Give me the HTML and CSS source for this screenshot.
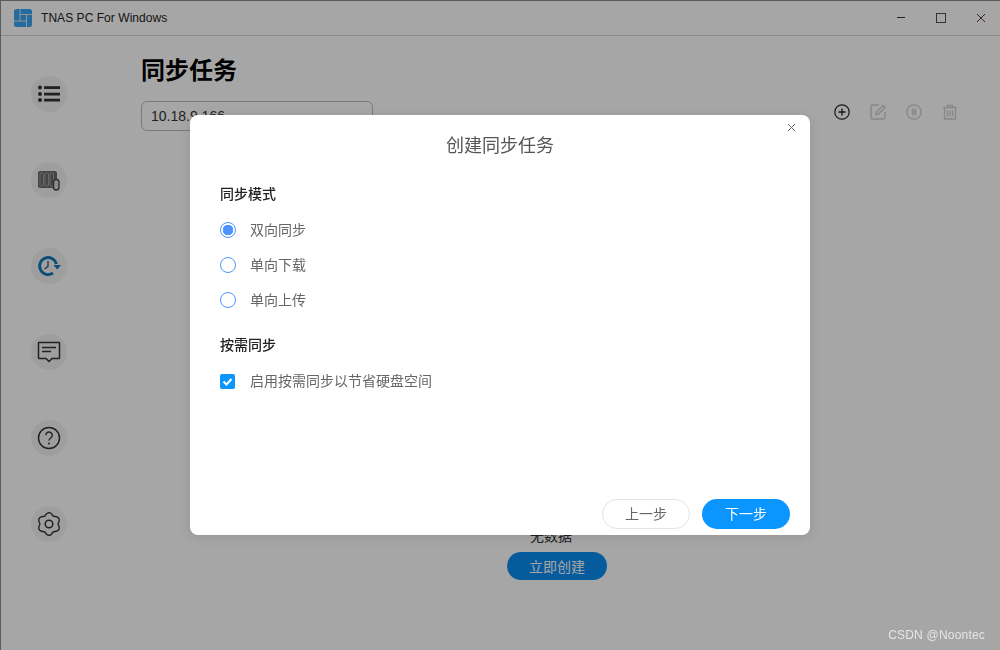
FILE: index.html
```html
<!DOCTYPE html>
<html lang="zh">
<head>
<meta charset="utf-8">
<title>TNAS PC For Windows</title>
<link rel="stylesheet" href="styles.css">
</head>
<body>
<div class="window">
  <header class="titlebar">
    <svg class="logo" width="18" height="18" viewBox="0 0 18 18"><rect width="18" height="18" rx="2.500" fill="#38a6f5"/><path d="M6 0V12M6 5.500H18M12.500 5.500V18M0 12H12.500" fill="none" stroke="#e4e4e4" stroke-width="1"/></svg>
    <span class="app-name">TNAS PC For Windows</span>
    <div class="win-controls">
      <svg width="12" height="12" viewBox="0 0 12 12"><path d="M2 5.500h8" stroke="#3a3a3a" fill="none"/></svg>
      <svg width="12" height="12" viewBox="0 0 12 12"><rect x="1.500" y="1.500" width="9" height="9" fill="none" stroke="#5a4a3c"/></svg>
      <svg width="12" height="12" viewBox="0 0 12 12"><path d="M2 2l8 8M10 2l-8 8" stroke="#5a3a30" fill="none"/></svg>
    </div>
  </header>
  <div class="main">
    <nav class="sidebar">
      <div class="nav-btn"><svg width="24" height="24" viewBox="0 0 24 24"><g fill="#333"><circle cx="3" cy="5.500" r="2"/><circle cx="3" cy="12" r="2"/><circle cx="3" cy="18" r="2"/><rect x="7" y="4.200" width="16" height="2.800"/><rect x="7" y="10.700" width="16" height="2.800"/><rect x="7" y="16.700" width="16" height="2.800"/></g></svg></div>
      <div class="nav-btn"><svg width="24" height="24" viewBox="0 0 24 24"><rect x="1" y="3" width="19" height="17" rx="2" fill="#6a6a6a"/><g fill="none" stroke="#a0a0a0"><rect x="3" y="5" width="3.500" height="13" rx="1"/><rect x="8" y="5" width="3.500" height="13" rx="1"/><rect x="13" y="5" width="3.500" height="13" rx="1"/></g><rect x="16.500" y="11.500" width="5.500" height="10.500" rx="2.700" fill="#d8d8d8" stroke="#4a4a4a" stroke-width="1.400"/></svg></div>
      <div class="nav-btn"><svg width="24" height="24" viewBox="0 0 24 24"><path d="M19.400 10A8.500 8.500 0 1 0 16 19" fill="none" stroke="#0f78b8" stroke-width="2.800"/><path d="M16.500 11h7.500l-3.700 4.500z" fill="#0f78b8"/><path d="M11 7V12.500L7.500 15" fill="none" stroke="#17506e" stroke-width="1.200"/></svg></div>
      <div class="nav-btn"><svg width="24" height="24" viewBox="0 0 24 24"><path d="M2 2.500h20a.5.5 0 0 1 .5.5v15a.5.5 0 0 1-.5.500h-7l-3 3-3-3H2a.5.5 0 0 1-.5-.5V3a.5.5 0 0 1 .5-.5z" fill="none" stroke="#333" stroke-width="1.500"/><path d="M5 7.500h14M5 11.500h9" stroke="#333" stroke-width="1.600" fill="none"/></svg></div>
      <div class="nav-btn"><svg width="24" height="24" viewBox="0 0 24 24"><circle cx="12" cy="12" r="10.500" fill="none" stroke="#333" stroke-width="1.500"/><path d="M8.800 9.200a3.200 3.200 0 1 1 4.800 2.800c-1.100.7-1.600 1.300-1.600 2.600" fill="none" stroke="#333" stroke-width="1.400"/><circle cx="12" cy="17.500" r="1" fill="#333"/></svg></div>
      <div class="nav-btn"><svg width="24" height="24" viewBox="0 0 24 24"><path d="M21 12Q25 4.500 16.250 4.200Q12 -3 7.750 4.200Q-1 4.500 3 12Q-1 19.500 7.750 19.800Q12 27 16.250 19.800Q25 19.500 21 12Z" fill="none" stroke="#333" stroke-width="1.400" stroke-linejoin="round"/><circle cx="12" cy="12" r="3.800" fill="none" stroke="#333" stroke-width="1.500"/></svg></div>
    </nav>
    <section class="content">
      <h1 class="page-title">同步任务</h1>
      <div class="toolbar-row">
        <div class="select">10.18.9.166</div>
        <div class="tools">
          <svg width="16" height="16" viewBox="0 0 16 16"><circle cx="8" cy="8" r="7.200" fill="none" stroke="#222" stroke-width="1.200"/><path d="M8 4.500v7M4.500 8h7" stroke="#222" stroke-width="1.300"/></svg>
          <svg width="16" height="16" viewBox="0 0 16 16"><path d="M8.500 1H2.500A1.500 1.500 0 0 0 1 2.500v11A1.500 1.500 0 0 0 2.500 15H13.500A1.500 1.500 0 0 0 15 13.500V8" fill="none" stroke="#d0d0d0" stroke-width="1.400"/><path d="M6 10.500l.5-2.500 6.500-6.500 2 2L8.500 10z" fill="none" stroke="#d0d0d0" stroke-width="1.400"/></svg>
          <svg width="16" height="16" viewBox="0 0 16 16"><circle cx="8" cy="8" r="7.200" fill="none" stroke="#d0d0d0" stroke-width="1.300"/><rect x="5.800" y="4.800" width="1.800" height="6.400" fill="#d0d0d0"/><rect x="8.400" y="4.800" width="1.800" height="6.400" fill="#d0d0d0"/></svg>
          <svg width="16" height="16" viewBox="0 0 16 16"><path d="M1 3.500h14M5.500 3.500V1.500h5v2M2.500 3.500V15h11V3.500" fill="none" stroke="#d0d0d0" stroke-width="1.300"/><path d="M5.500 6.500v6M8 6.500v6M10.500 6.500v6" stroke="#d0d0d0" stroke-width="1.300"/></svg>
        </div>
      </div>
      <div class="empty">
        <span class="empty-text">无数据</span>
        <button class="create-btn">立即创建</button>
      </div>
    </section>
  </div>
</div>

<div class="overlay"></div>

<div class="modal">
  <div class="modal-head">
    <h2 class="modal-title">创建同步任务</h2>
    <svg class="modal-close" width="9" height="9" viewBox="0 0 9 9"><path d="M1 1l7 7M8 1l-7 7" stroke="#666" fill="none"/></svg>
  </div>
  <div class="modal-body">
    <h3 class="group-title">同步模式</h3>
    <div class="radio-list">
      <label class="option"><span class="radio on"></span>双向同步</label>
      <label class="option"><span class="radio"></span>单向下载</label>
      <label class="option"><span class="radio"></span>单向上传</label>
    </div>
    <h3 class="group-title second">按需同步</h3>
    <label class="option check-row"><span class="check"><svg width="15" height="15" viewBox="0 0 15 15"><path d="M3.500 7.500l3 3 5-5.500" fill="none" stroke="#fff" stroke-width="2"/></svg></span>启用按需同步以节省硬盘空间</label>
  </div>
  <div class="modal-foot">
    <button class="btn ghost">上一步</button>
    <button class="btn primary">下一步</button>
  </div>
</div>

<div class="watermark">CSDN @Noontec</div>
</body>
</html>
```
FILE: styles.css
```css
* { box-sizing: border-box; }
html, body { margin: 0; height: 100%; overflow: hidden; }
body { font-family: "Noto Sans CJK SC", "Liberation Sans", sans-serif; background: #fff; }

.window { width: 1000px; height: 650px; display: flex; flex-direction: column; border: 1px solid #8c8c8c; border-bottom: 0; border-right: 0; background: #fff; }
.titlebar { height: 35px; flex: none; display: flex; align-items: center; padding-left: 13px; border-bottom: 1px solid #d6d6d6; background: #fff; }
.logo { flex: none; }
.app-name { font: 12px "Liberation Sans", sans-serif; letter-spacing: .05px; color: #222; margin-left: 9px; }
.win-controls { margin-left: auto; display: flex; gap: 28px; padding-right: 13px; }

.main { flex: 1; display: flex; min-height: 0; }
.sidebar { width: 140px; flex: none; padding: 40px 0 0 30px; display: flex; flex-direction: column; gap: 50px; }
.nav-btn { width: 36px; height: 36px; border-radius: 50%; background: #f3f3f3; display: flex; align-items: center; justify-content: center; }

.content { flex: 1; display: flex; flex-direction: column; min-width: 0; }
.page-title { margin: 16px 0 0; font-size: 24px; line-height: 34px; font-weight: 700; color: #000; }
.toolbar-row { display: flex; align-items: flex-start; margin-top: 15px; padding-right: 42px; }
.select { width: 232px; height: 30px; border: 1px solid #bcbcbc; border-radius: 6px; padding-left: 9px; font: 14px/28px "Liberation Sans", sans-serif; color: #333; background: #fff; }
.tools { margin-left: auto; display: flex; gap: 20px; padding-top: 3px; }
.empty { margin-top: 394px; display: flex; flex-direction: column; align-items: center; width: 832px; }
.empty-text { font-size: 14px; line-height: 20px; color: #333; margin-right: 12px; }
.create-btn { width: 100px; height: 28px; margin-top: 7px; border: 0; border-radius: 14px; background: #0a8cf0; color: #fff; font: 14px "Noto Sans CJK SC", sans-serif; padding: 0; }

.overlay { position: fixed; inset: 0; background: rgba(0, 0, 0, .35); }

.modal { position: absolute; left: 190px; top: 115px; width: 620px; height: 420px; background: #fff; border-radius: 8px; display: flex; flex-direction: column; box-shadow: 0 2px 12px rgba(0, 0, 0, .1); }
.modal-head { height: 58px; flex: none; position: relative; display: flex; align-items: center; justify-content: center; }
.modal-title { margin: 0; font-size: 18px; line-height: 26px; font-weight: 400; color: #555; }
.modal-close { position: absolute; top: 8px; right: 14px; }
.modal-body { flex: 1; padding: 10px 30px 0; }
.group-title { margin: 0; font-size: 14px; line-height: 20px; font-weight: 500; color: #222; }
.group-title.second { margin-top: 25px; }
.radio-list { display: flex; flex-direction: column; gap: 15px; margin-top: 16px; }
.option { display: flex; align-items: center; gap: 14px; font-size: 14px; line-height: 20px; color: #666; }
.radio { width: 16px; height: 16px; flex: none; margin-top: 2px; border: 1px solid #4d94ff; border-radius: 50%; background: #fff; }
.radio.on { background: radial-gradient(circle, #4d94ff 0, #4d94ff 5px, #fff 5.500px); }
.check-row { margin-top: 16px; gap: 15px; }
.check { width: 15px; height: 15px; flex: none; margin-top: 2px; border-radius: 2px; background: #0a95ff; display: flex; }
.modal-foot { display: flex; justify-content: flex-end; gap: 12px; padding: 0 20px 6px; }
.btn { width: 88px; height: 30px; border-radius: 15px; font: 14px "Noto Sans CJK SC", sans-serif; padding: 0 0 2px; }
.btn.ghost { border: 1px solid #e4e4e4; background: #fff; color: #666; }
.btn.primary { border: 0; background: #0a95ff; color: #fff; }

.watermark { position: absolute; right: 15px; bottom: 8px; font: 12px "Liberation Sans", sans-serif; letter-spacing: .2px; color: #e6e6e6; }
```
